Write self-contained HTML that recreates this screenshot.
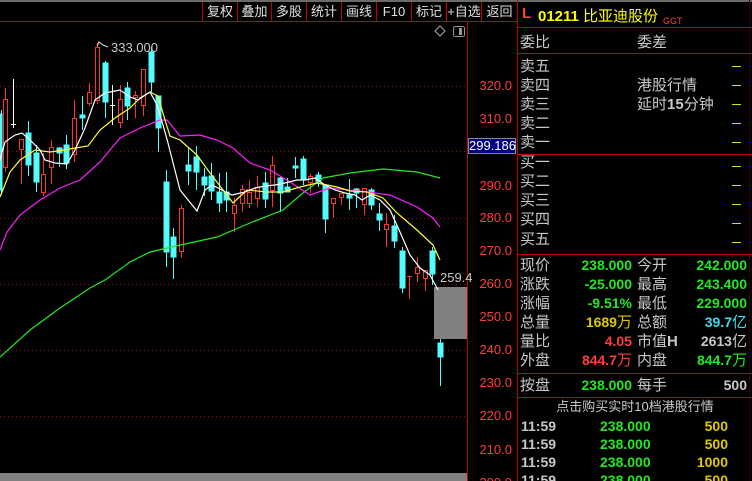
<!DOCTYPE html>
<html><head><meta charset="utf-8"><style>
*{margin:0;padding:0;box-sizing:border-box}
html,body{width:752px;height:481px;overflow:hidden}
body{background:#000;position:relative;font-family:"Liberation Sans","Noto Sans CJK SC",sans-serif}
.a{position:absolute;white-space:nowrap}
.tb{position:absolute;top:2px;height:19px;font-size:13px;color:#e0e0e0;text-align:center;line-height:19px}
.ax{position:absolute;left:470px;width:42px;text-align:right;font-size:13px;color:#ff3c3c;line-height:14px}
.lb{position:absolute;left:520px;font-size:15px;color:#c8c8c8;line-height:19px}
.lb2{position:absolute;left:637px;font-size:15px;color:#c8c8c8;line-height:19px}
.v1{position:absolute;right:120px;font-size:14px;font-weight:bold;line-height:19px;text-align:right}
.v2{position:absolute;right:5px;font-size:14px;font-weight:bold;line-height:19px;text-align:right}
.dash{position:absolute;left:732px;width:9px;height:1px;background:#e0e000}
.g{color:#22e822}.r{color:#ff3c3c}.y{color:#e0c800}.c{color:#3cdcf0}.w{color:#c8c8c8}
</style></head><body>
<div class="a" style="left:0;top:0;width:752px;height:2px;background:#6a6a6a"></div>
<div class="a" style="left:0;top:21px;width:518px;height:1px;background:#c00000"></div>
<div class="a" style="left:467px;top:21px;width:1px;height:460px;background:#c00000"></div>
<div class="a" style="left:517px;top:0;width:1px;height:481px;background:#c00000"></div>
<div class="a" style="left:749px;top:0;width:1px;height:481px;background:#300"></div>
<div class="a" style="left:202px;top:2px;width:1px;height:19px;background:#c00000"></div>
<div class="a" style="left:237px;top:2px;width:1px;height:19px;background:#c00000"></div>
<div class="a" style="left:271px;top:2px;width:1px;height:19px;background:#c00000"></div>
<div class="a" style="left:306px;top:2px;width:1px;height:19px;background:#c00000"></div>
<div class="a" style="left:341px;top:2px;width:1px;height:19px;background:#c00000"></div>
<div class="a" style="left:376px;top:2px;width:1px;height:19px;background:#c00000"></div>
<div class="a" style="left:411px;top:2px;width:1px;height:19px;background:#c00000"></div>
<div class="a" style="left:446px;top:2px;width:1px;height:19px;background:#c00000"></div>
<div class="a" style="left:481px;top:2px;width:1px;height:19px;background:#c00000"></div>
<div class="tb" style="left:203px;width:34px">复权</div>
<div class="tb" style="left:238px;width:33px">叠加</div>
<div class="tb" style="left:272px;width:34px">多股</div>
<div class="tb" style="left:307px;width:34px">统计</div>
<div class="tb" style="left:342px;width:34px">画线</div>
<div class="tb" style="left:377px;width:34px">F10</div>
<div class="tb" style="left:412px;width:34px">标记</div>
<div class="tb" style="left:447px;width:34px">+自选</div>
<div class="tb" style="left:482px;width:35px">返回</div>

<svg class="a" style="left:0;top:0" width="468" height="481" shape-rendering="crispEdges">
<g stroke="#a00000" stroke-dasharray="1,3">
<line x1="0" y1="86.5" x2="467" y2="86.5"/><line x1="0" y1="151.5" x2="467" y2="151.5"/>
<line x1="0" y1="218.5" x2="467" y2="218.5"/><line x1="0" y1="284.5" x2="467" y2="284.5"/>
<line x1="0" y1="350.5" x2="467" y2="350.5"/><line x1="0" y1="416.5" x2="467" y2="416.5"/>
</g>
<rect x="0" y="473" width="467" height="8" fill="#808080"/>
<rect x="434" y="287" width="33" height="52" fill="#808080"/>
<path d="M440 26 L445 31 L440 36 L435 31 Z" fill="none" stroke="#aaa" shape-rendering="auto"/>
<rect x="453.5" y="26.5" width="11" height="10" rx="2" fill="none" stroke="#999"/>
<rect x="459" y="28" width="3" height="7" fill="#999"/>
<g stroke="#54fcfc" fill="#54fcfc">
<line x1="1.5" y1="110" x2="1.5" y2="195"/><rect x="-1" y="114" width="3" height="76"/>
<line x1="28.5" y1="121" x2="28.5" y2="176"/><rect x="26" y="133" width="5" height="32"/>
<line x1="36.5" y1="145" x2="36.5" y2="192"/><rect x="34" y="153" width="5" height="29"/>
<line x1="59.5" y1="147" x2="59.5" y2="167"/><rect x="57" y="148" width="5" height="5"/>
<line x1="66.5" y1="135" x2="66.5" y2="169"/><rect x="64" y="145" width="5" height="18"/>
<line x1="82.5" y1="96" x2="82.5" y2="130"/><rect x="80" y="115" width="5" height="3"/>
<line x1="105.5" y1="61" x2="105.5" y2="118"/><rect x="103" y="63" width="5" height="39"/>
<line x1="127.5" y1="82" x2="127.5" y2="120"/><rect x="125" y="88" width="5" height="18"/>
<line x1="151.5" y1="47" x2="151.5" y2="92"/><rect x="149" y="52" width="5" height="30"/>
<line x1="158.5" y1="96" x2="158.5" y2="152"/><rect x="156" y="96" width="5" height="32"/>
<line x1="166.5" y1="170" x2="166.5" y2="267"/><rect x="164" y="182" width="5" height="70"/>
<line x1="173.5" y1="228" x2="173.5" y2="279"/><rect x="171" y="237" width="5" height="20"/>
<line x1="188.5" y1="148" x2="188.5" y2="185"/><rect x="186" y="165" width="5" height="6"/>
<line x1="196.5" y1="146" x2="196.5" y2="190"/><rect x="194" y="157" width="5" height="15"/>
<line x1="204.5" y1="168" x2="204.5" y2="196"/><rect x="202" y="177" width="5" height="8"/>
<line x1="211.5" y1="163" x2="211.5" y2="200"/><rect x="209" y="176" width="5" height="15"/>
<line x1="219.5" y1="173" x2="219.5" y2="212"/><rect x="217" y="192" width="5" height="11"/>
<line x1="226.5" y1="172" x2="226.5" y2="212"/><rect x="224" y="192" width="5" height="8"/>
<line x1="265.5" y1="172" x2="265.5" y2="208"/><rect x="263" y="183" width="5" height="16"/>
<line x1="280.5" y1="177" x2="280.5" y2="212"/><rect x="278" y="178" width="5" height="15"/>
<line x1="287.5" y1="178" x2="287.5" y2="192"/><rect x="285" y="187" width="5" height="5"/>
<line x1="295.5" y1="157" x2="295.5" y2="178"/><rect x="293" y="166" width="5" height="2"/>
<line x1="303.5" y1="156" x2="303.5" y2="185"/><rect x="301" y="159" width="5" height="21"/>
<line x1="318.5" y1="172" x2="318.5" y2="187"/><rect x="316" y="175" width="5" height="7"/>
<line x1="325.5" y1="185" x2="325.5" y2="233"/><rect x="323" y="185" width="5" height="34"/>
<line x1="349.5" y1="179" x2="349.5" y2="210"/><rect x="347" y="195" width="5" height="3"/>
<line x1="356.5" y1="188" x2="356.5" y2="208"/><rect x="354" y="189" width="5" height="4"/>
<line x1="371.5" y1="188" x2="371.5" y2="210"/><rect x="369" y="190" width="5" height="15"/>
<line x1="379.5" y1="203" x2="379.5" y2="231"/><rect x="377" y="214" width="5" height="6"/>
<line x1="394.5" y1="215" x2="394.5" y2="248"/><rect x="392" y="226" width="5" height="15"/>
<line x1="402.5" y1="247" x2="402.5" y2="293"/><rect x="400" y="251" width="5" height="37"/>
<line x1="432.5" y1="247" x2="432.5" y2="285"/><rect x="430" y="251" width="5" height="23"/>
<line x1="440.5" y1="339" x2="440.5" y2="386"/><rect x="438" y="343" width="5" height="14"/>
</g>
<g stroke="#ff3232" fill="#000">
<line x1="5.5" y1="88" x2="5.5" y2="172"/><rect x="3.5" y="99.5" width="4" height="68"/>
<line x1="21.5" y1="139" x2="21.5" y2="184"/><rect x="19.5" y="139.5" width="4" height="10"/>
<line x1="43.5" y1="153" x2="43.5" y2="196"/><rect x="41.5" y="174.5" width="4" height="18"/>
<line x1="51.5" y1="140" x2="51.5" y2="184"/><rect x="49.5" y="147.5" width="4" height="20"/>
<line x1="74.5" y1="100" x2="74.5" y2="162"/><rect x="72.5" y="118.5" width="4" height="36"/>
<line x1="89.5" y1="83" x2="89.5" y2="106"/><rect x="87.5" y="92.5" width="4" height="11"/>
<line x1="97.5" y1="43" x2="97.5" y2="104"/><rect x="95.5" y="47.5" width="4" height="53"/>
<line x1="120.5" y1="85" x2="120.5" y2="128"/><rect x="118.5" y="99.5" width="4" height="23"/>
<line x1="135.5" y1="91" x2="135.5" y2="118"/><rect x="133.5" y="95.5" width="4" height="2"/>
<line x1="143.5" y1="69" x2="143.5" y2="116"/><rect x="141.5" y="69.5" width="4" height="36"/>
<line x1="181.5" y1="205" x2="181.5" y2="258"/><rect x="179.5" y="208.5" width="4" height="43"/>
<line x1="234.5" y1="198" x2="234.5" y2="232"/><rect x="232.5" y="205.5" width="4" height="8"/>
<line x1="242.5" y1="185" x2="242.5" y2="212"/><rect x="240.5" y="189.5" width="4" height="14"/>
<line x1="249.5" y1="180" x2="249.5" y2="208"/><rect x="247.5" y="192.5" width="4" height="11"/>
<line x1="257.5" y1="176" x2="257.5" y2="207"/><rect x="255.5" y="187.5" width="4" height="11"/>
<line x1="272.5" y1="156" x2="272.5" y2="207"/><rect x="270.5" y="165.5" width="4" height="25"/>
<line x1="310.5" y1="174" x2="310.5" y2="193"/><rect x="308.5" y="176.5" width="4" height="6"/>
<line x1="333.5" y1="198" x2="333.5" y2="218"/><rect x="331.5" y="198.5" width="4" height="5"/>
<line x1="341.5" y1="193" x2="341.5" y2="205"/><rect x="339.5" y="193.5" width="4" height="4"/>
<line x1="364.5" y1="188" x2="364.5" y2="215"/><rect x="362.5" y="188.5" width="4" height="16"/>
<line x1="386.5" y1="213" x2="386.5" y2="247"/><rect x="384.5" y="224.5" width="4" height="5"/>
<line x1="409.5" y1="276" x2="409.5" y2="299"/><line x1="407" y1="276.5" x2="412" y2="276.5"/>
<line x1="417.5" y1="257" x2="417.5" y2="282"/><rect x="415.5" y="267.5" width="4" height="6"/>
<line x1="425.5" y1="270" x2="425.5" y2="291"/><rect x="423.5" y="270.5" width="4" height="8"/>
</g>
<g stroke="#fff"><line x1="13.5" y1="79" x2="13.5" y2="128"/><line x1="11" y1="124.5" x2="16" y2="124.5"/>
<line x1="112.5" y1="85" x2="112.5" y2="125"/><line x1="110" y1="105.5" x2="115" y2="105.5"/></g>
<g fill="none" stroke-width="1.2" shape-rendering="auto">
<polyline stroke="#22e822" points="0,357 30,330 60,308 90,288 105,280 130,262 150,252 185,244 217,237 250,223 283,210 303,193 323,178 350,173 383,169 417,172 440,178"/>
<polyline stroke="#ff20ff" points="0,250 7,232 20,215 40,200 60,188 80,180 100,162 120,138 140,128 160,120 167,120 180,136 200,135 217,140 233,148 250,163 270,170 290,182 310,195 330,188 367,192 390,195 417,207 433,218 440,227"/>
<polyline stroke="#ffff30" points="0,197 10,172 20,160 35,150 50,152 65,150 75,148 88,146 100,130 115,118 130,108 140,98 150,92 158,96 165,120 170,136 180,140 197,155 210,173 233,203 247,190 267,192 283,192 300,187 317,183 337,187 350,191 367,192 383,198 397,213 417,230 433,245 440,260"/>
<polyline stroke="#fff" points="0,160 5,142 15,135 22,133 30,140 40,150 45,160 55,163 67,164 75,150 85,128 95,100 105,93 120,90 130,97 138,100 150,92 157,105 163,125 168,143 180,190 197,211 205,190 212,185 222,190 232,195 245,192 255,188 265,186 275,185 285,183 297,180 305,180 315,178 325,185 335,190 345,193 355,195 362,200 370,195 380,200 390,210 400,232 410,255 420,268 430,275 438,290"/>
<polyline stroke="#ccc" points="97,46 99,42 103,45 108,47"/>
</g>
<g stroke="#c00000"><line x1="467" y1="86.5" x2="473" y2="86.5"/><line x1="467" y1="119.5" x2="473" y2="119.5"/><line x1="467" y1="186.5" x2="473" y2="186.5"/><line x1="467" y1="218.5" x2="473" y2="218.5"/><line x1="467" y1="251.5" x2="473" y2="251.5"/><line x1="467" y1="284.5" x2="473" y2="284.5"/><line x1="467" y1="317.5" x2="473" y2="317.5"/><line x1="467" y1="350.5" x2="473" y2="350.5"/><line x1="467" y1="383.5" x2="473" y2="383.5"/><line x1="467" y1="416.5" x2="473" y2="416.5"/><line x1="467" y1="450.5" x2="473" y2="450.5"/></g>
</svg>
<div class="a" style="left:111px;top:40px;font-size:13px;color:#c8c8c8">333.000</div>
<div class="a" style="left:440px;top:270px;font-size:13px;color:#c8c8c8">259.4</div>

<div class="ax" style="top:79px">320.0</div>
<div class="ax" style="top:112px">310.0</div>
<div class="ax" style="top:179px">290.0</div>
<div class="ax" style="top:211px">280.0</div>
<div class="ax" style="top:244px">270.0</div>
<div class="ax" style="top:277px">260.0</div>
<div class="ax" style="top:310px">250.0</div>
<div class="ax" style="top:343px">240.0</div>
<div class="ax" style="top:376px">230.0</div>
<div class="ax" style="top:409px">220.0</div>
<div class="ax" style="top:443px">210.0</div>
<div class="ax" style="top:476px">200.0</div>
<div class="a" style="left:468px;top:138px;width:48px;height:16px;background:#000080;border:1px solid #888;color:#fff;font-size:13px;line-height:14px;text-align:center">299.186</div>

<div class="a" style="left:522px;top:5px;font-size:15px;color:#ff4040;font-weight:bold">L</div>
<div class="a" style="left:538px;top:5px;font-size:15px;color:#ffff00"><b>01211</b> 比亚迪股份</div>
<div class="a" style="left:663px;top:16px;font-size:9px;color:#ff4040">GGT</div>
<div class="a" style="left:518px;top:27px;width:234px;height:1px;background:#c00000"></div>
<div class="lb" style="top:33px">委比</div><div class="lb2" style="top:33px">委差</div>
<div class="a" style="left:518px;top:53px;width:234px;height:1px;background:#c00000"></div>
<div class="lb" style="top:57px">卖五</div>
<div class="lb" style="top:76px">卖四</div>
<div class="lb" style="top:95px">卖三</div>
<div class="lb" style="top:114px">卖二</div>
<div class="lb" style="top:133px">卖一</div>
<div class="lb2" style="top:76px">港股行情</div>
<div class="lb2" style="top:95px">延时<b>15</b>分钟</div>
<div class="a" style="left:518px;top:154px;width:234px;height:1px;background:#c00000"></div>
<div class="lb" style="top:153px">买一</div>
<div class="lb" style="top:172px">买二</div>
<div class="lb" style="top:191px">买三</div>
<div class="lb" style="top:210px">买四</div>
<div class="lb" style="top:230px">买五</div>
<div class="dash" style="top:66px"></div><div class="dash" style="top:85px"></div><div class="dash" style="top:104px"></div><div class="dash" style="top:123px"></div><div class="dash" style="top:142px"></div>
<div class="dash" style="top:166px"></div><div class="dash" style="top:185px"></div><div class="dash" style="top:204px"></div><div class="dash" style="top:223px"></div><div class="dash" style="top:242px"></div>
<div class="a" style="left:518px;top:254px;width:234px;height:1px;background:#c00000"></div>
<div class="lb" style="top:256px">现价</div><div class="v1 g" style="top:256px">238.000</div><div class="lb2" style="top:256px">今开</div><div class="v2 g" style="top:256px">242.000</div>
<div class="lb" style="top:275px">涨跌</div><div class="v1 g" style="top:275px">-25.000</div><div class="lb2" style="top:275px">最高</div><div class="v2 g" style="top:275px">243.400</div>
<div class="lb" style="top:294px">涨幅</div><div class="v1 g" style="top:294px">-9.51%</div><div class="lb2" style="top:294px">最低</div><div class="v2 g" style="top:294px">229.000</div>
<div class="lb" style="top:313px">总量</div><div class="v1 y" style="top:313px">1689<span style="font-weight:normal;font-size:15px">万</span></div><div class="lb2" style="top:313px">总额</div><div class="v2 c" style="top:313px">39.7<span style="font-weight:normal;font-size:15px">亿</span></div>
<div class="lb" style="top:332px">量比</div><div class="v1 r" style="top:332px">4.05</div><div class="lb2" style="top:332px">市值<b>H</b></div><div class="v2 w" style="top:332px">2613<span style="font-weight:normal;font-size:15px">亿</span></div>
<div class="lb" style="top:351px">外盘</div><div class="v1 r" style="top:351px">844.7<span style="font-weight:normal;font-size:15px">万</span></div><div class="lb2" style="top:351px">内盘</div><div class="v2 g" style="top:351px">844.7<span style="font-weight:normal;font-size:15px">万</span></div>
<div class="a" style="left:518px;top:373px;width:234px;height:1px;background:#c00000"></div>
<div class="lb" style="top:376px">按盘</div><div class="v1 g" style="top:376px">238.000</div><div class="lb2" style="top:376px">每手</div><div class="v2 w" style="top:376px">500</div>
<div class="a" style="left:518px;top:397px;width:234px;height:1px;background:#c00000"></div>
<div class="a" style="left:518px;top:399px;width:234px;text-align:center;font-size:13px;color:#c8c8c8;line-height:16px">点击购买实时10档港股行情</div>
<div class="a w" style="left:521px;top:418px;font-size:14px;font-weight:bold">11:59</div><div class="a g" style="left:600px;top:418px;font-size:14px;font-weight:bold">238.000</div><div class="a y" style="right:24px;top:418px;font-size:14px;font-weight:bold">500</div>
<div class="a w" style="left:521px;top:436px;font-size:14px;font-weight:bold">11:59</div><div class="a g" style="left:600px;top:436px;font-size:14px;font-weight:bold">238.000</div><div class="a y" style="right:24px;top:436px;font-size:14px;font-weight:bold">500</div>
<div class="a w" style="left:521px;top:454px;font-size:14px;font-weight:bold">11:59</div><div class="a g" style="left:600px;top:454px;font-size:14px;font-weight:bold">238.000</div><div class="a y" style="right:24px;top:454px;font-size:14px;font-weight:bold">1000</div>
<div class="a w" style="left:521px;top:472px;font-size:14px;font-weight:bold">11:59</div><div class="a g" style="left:600px;top:472px;font-size:14px;font-weight:bold">238.000</div><div class="a y" style="right:24px;top:472px;font-size:14px;font-weight:bold">500</div>
</body></html>
